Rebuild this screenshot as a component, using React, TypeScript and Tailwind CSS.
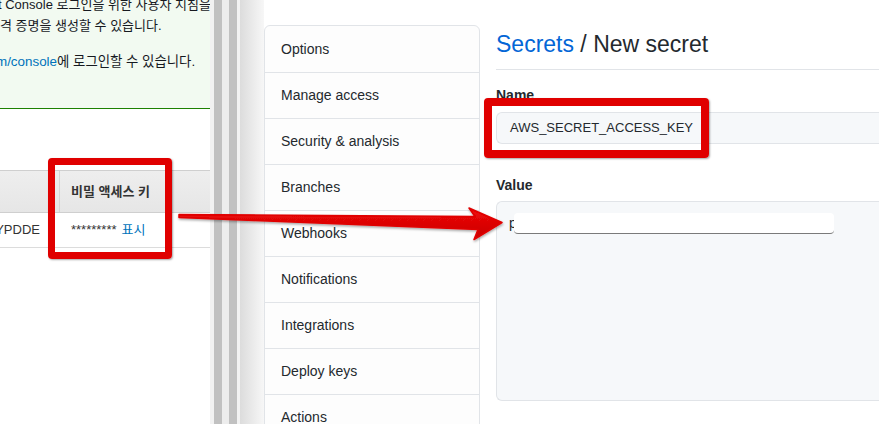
import React from 'react';

const sideItems = [
  'Options',
  'Manage access',
  'Security & analysis',
  'Branches',
  'Webhooks',
  'Notifications',
  'Integrations',
  'Deploy keys',
  'Actions',
];

const AwsPane: React.FC = () => (
  <div className="w-[210px] shrink-0 overflow-hidden bg-white font-['Liberation_Sans','Noto_Sans_CJK_KR',sans-serif] text-[13px] text-[#16191f]">
    <div className="flow-root h-[109px] bg-[#f2faf1] border-b-[1.5px] border-[#1d8102]">
      <div className="-mt-[6px] leading-[21px] whitespace-nowrap">
        <p className="-ml-[2px]">t Console 로그인을 위한 사용자 지침을</p>
        <p>격 증명을 생성할 수 있습니다.</p>
        <p className="mt-[15px] -ml-[4px] text-[13.4px]">
          <span className="text-[#0073bb]">m/console</span>에 로그인할 수 있습니다.
        </p>
      </div>
    </div>
    <div className="mt-[61px] border-t border-[#cfcfcf]">
      <div className="flex h-[42px] bg-[linear-gradient(#eeeeee,#e6e6e6)] border-b border-[#cfcfcf]">
        <div className="w-[60px] border-r border-[#d5d5d5]" />
        <div className="flex items-center pl-[11px] font-bold text-[#333] whitespace-nowrap">비밀 액세스 키</div>
      </div>
      <div className="flex h-[35px] border-b border-[#dcdcdc] text-[#333]">
        <div className="w-[60px] flex justify-end items-center pr-[20px] whitespace-nowrap overflow-hidden">
          <span className="shrink-0">AKIAJ7YPDDE</span>
        </div>
        <div className="flex items-center pl-[11px] whitespace-nowrap">
          *********<span className="ml-[5px] text-[#0073bb]">표시</span>
        </div>
      </div>
    </div>
  </div>
);

const Divider: React.FC = () => (
  <div className="flex shrink-0 h-full">
    <div className="w-[4px] bg-[#f2f2f2]" />
    <div className="w-[8px] bg-[#c1c1c1]" />
    <div className="w-[7px] bg-[#ededed]" />
    <div className="w-[8px] bg-[#c1c1c1]" />
    <div className="w-[3px] bg-[#f2f2f2]" />
  </div>
);

const GithubPane: React.FC = () => (
  <div className="flex flex-1 overflow-hidden bg-white font-['Liberation_Sans',sans-serif] text-[#24292e]">
    <div className="w-[24px] shrink-0 bg-[linear-gradient(to_right,#dcdcdc,#f7f7f7)]" />
    <div className="w-[216px] shrink-0 mt-[25px] self-start rounded-[6px] border border-[#e1e4e8] bg-[#fdfdfd]">
      {sideItems.map((item, i) => (
        <div
          key={item}
          className={`h-[46px] flex items-center px-[16px] text-[14px] ${i > 0 ? 'border-t border-[#e1e4e8]' : ''}`}
        >
          {item}
        </div>
      ))}
    </div>
    <div className="ml-[16px] w-[420px] shrink-0">
      <div className="mt-[28px] pb-[9px] border-b border-[#e1e4e8] text-[23px] leading-[32px] whitespace-nowrap">
        <span className="text-[#0366d6]">Secrets</span> / New secret
      </div>
      <div className="mt-[15px] text-[14px] leading-[20px] font-bold">Name</div>
      <div className="mt-[7px] h-[32px] flex items-center pl-[13px] rounded-l-[6px] border border-r-0 border-[#e1e4e8] bg-[#f6f8fa] text-[13px] whitespace-nowrap">
        AWS_SECRET_ACCESS_KEY
      </div>
      <div className="mt-[31px] text-[14px] leading-[20px] font-bold">Value</div>
      <div className="relative mt-[6px] h-[200px] rounded-l-[6px] border border-r-0 border-[#e1e4e8] bg-[#f6f8fa]">
        <span className="absolute left-[12px] top-[11px] text-[14px] leading-[20px]">p</span>
        <div className="absolute left-[17px] top-[11px] w-[320px] h-[21px] rounded-[4px] bg-white border-b border-[#7a7a7a]" />
      </div>
    </div>
  </div>
);

const Arrow: React.FC = () => (
  <svg className="absolute left-0 top-0 pointer-events-none" width="879" height="424" viewBox="0 0 879 424">
    <defs>
      <filter id="arrowShadow" x="-10%" y="-50%" width="120%" height="200%">
        <feDropShadow dx="0.5" dy="1.5" stdDeviation="1" floodColor="#000" floodOpacity="0.35" />
      </filter>
      <linearGradient id="arrowFill" x1="0" y1="0" x2="0" y2="1">
        <stop offset="0" stopColor="#f00a0a" />
        <stop offset="1" stopColor="#c80000" />
      </linearGradient>
    </defs>
    <path
      d="M179 214.5 L475 216.5 L469 208 L502 222.5 L474 239.5 L478 229.5 L179 217.5 Z"
      fill="url(#arrowFill)"
      stroke="#e00000"
      strokeWidth="1.5"
      strokeLinejoin="round"
      filter="url(#arrowShadow)"
    />
  </svg>
);

export default function App() {
  return (
    <div className="relative w-[879px] h-[424px] overflow-hidden bg-white flex">
      <AwsPane />
      <Divider />
      <GithubPane />
      <div className="absolute left-[48px] top-[158px] w-[124px] h-[101px] rounded-[4px] border-[7px] border-[#e00000] shadow-[1px_1px_2px_rgba(0,0,0,0.35)]" />
      <div className="absolute left-[484px] top-[98px] w-[225px] h-[60px] rounded-[4px] border-[8px] border-[#e00000] shadow-[1px_1px_2px_rgba(0,0,0,0.35)]" />
      <Arrow />
    </div>
  );
}
